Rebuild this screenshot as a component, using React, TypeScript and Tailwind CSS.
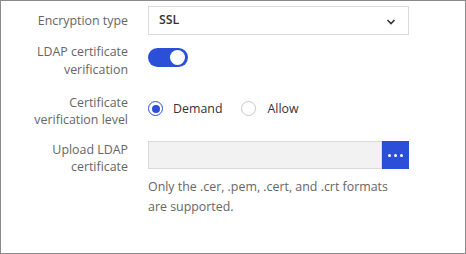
import React from "react";

export default function App() {
  const font = { fontFamily: '"Open Sans", "Noto Sans", sans-serif' };
  return (
    <div className="w-[466px] h-[254px] bg-white border border-[#8a8a8a] box-border" style={font}>
      <div className="flex flex-col pt-[5px]">
        {/* Row 1 */}
        <div className="flex items-center h-[29px]">
          <div className="w-[127px] text-right text-[12.4px] leading-[18px] text-[#666666]">Encryption type</div>
          <div className="ml-[20px] w-[261px] h-[29px] border border-[#d9d9d9] flex items-center justify-between pl-[10px] pr-[12px] text-[12.4px] text-[#333333]">
            <span className="font-semibold">SSL</span>
            <svg width="10" height="6" viewBox="0 0 10 6" className="mt-[2px]">
              <path d="M1.5 1 L5 4.5 L8.5 1" fill="none" stroke="#333" strokeWidth="1.6" />
            </svg>
          </div>
        </div>
        {/* Row 2 */}
        <div className="flex items-center mt-[8px]">
          <div className="w-[127px] text-right text-[12.4px] leading-[18px] text-[#666666]">
            LDAP certificate
            <br />
            verification
          </div>
          <div className="ml-[20px] w-[40px] h-[19px] rounded-full bg-[#2c4fd7] relative mt-[-8px]">
            <div className="absolute right-[3px] top-[2px] w-[15px] h-[15px] rounded-full bg-white" />
          </div>
        </div>
        {/* Row 3 */}
        <div className="flex items-center mt-[15px]">
          <div className="w-[127px] text-right text-[12.4px] leading-[17px] text-[#666666]">
            Certificate
            <br />
            verification level
          </div>
          <div className="ml-[20px] flex items-center mt-[-4px] text-[12.4px] text-[#333333]">
            <div className="w-[15px] h-[15px] rounded-full border border-[#2c4fd7] flex items-center justify-center">
              <div className="w-[8px] h-[8px] rounded-full bg-[#2c4fd7]" />
            </div>
            <span className="ml-[10px]">Demand</span>
            <div className="ml-[19px] w-[15px] h-[15px] rounded-full border border-[#c8c8c8]" />
            <span className="ml-[11px]">Allow</span>
          </div>
        </div>
        {/* Row 4 */}
        <div className="flex items-start mt-[13px]">
          <div className="w-[127px] text-right text-[12.4px] leading-[17px] text-[#666666] pt-0">
            Upload LDAP
            <br />
            certificate
          </div>
          <div className="ml-[20px] flex flex-col">
            <div className="flex h-[28px]">
              <div className="w-[234px] h-[28px] bg-[#f2f2f2] border border-[#d9d9d9]" />
              <div className="w-[27px] h-[28px] bg-[#2c4fd7] flex items-center justify-center gap-[3px]">
                <div className="w-[3px] h-[3px] rounded-full bg-white" />
                <div className="w-[3px] h-[3px] rounded-full bg-white" />
                <div className="w-[3px] h-[3px] rounded-full bg-white" />
              </div>
            </div>
            <div className="mt-[8px] text-[12.4px] leading-[20px] text-[#666666] w-[270px]">
              Only the .cer, .pem, .cert, and .crt formats
              <br />
              are supported.
            </div>
          </div>
        </div>
      </div>
    </div>
  );
}
